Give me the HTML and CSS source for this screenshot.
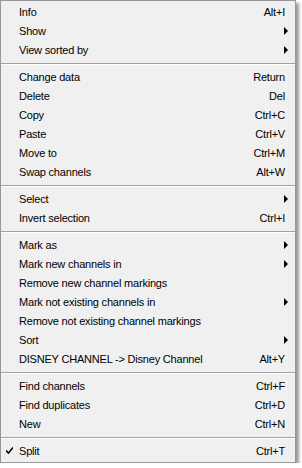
FILE: index.html
```html
<!DOCTYPE html>
<html lang="en">
  <head>
    <meta charset="UTF-8" />
    <title>Channel list - context menu</title>
    <link rel="stylesheet" href="styles.css">
  </head>
  <body>
    <ul class="menu">
      <li class="item"><span class="label">Info</span><span class="key">Alt+I</span></li>
      <li class="item"><span class="label">Show</span><span class="arrow"></span></li>
      <li class="item"><span class="label">View sorted by</span><span class="arrow"></span></li>
      <li class="sep"></li>
      <li class="item"><span class="label">Change data</span><span class="key">Return</span></li>
      <li class="item"><span class="label">Delete</span><span class="key">Del</span></li>
      <li class="item"><span class="label">Copy</span><span class="key">Ctrl+C</span></li>
      <li class="item"><span class="label">Paste</span><span class="key">Ctrl+V</span></li>
      <li class="item"><span class="label">Move to</span><span class="key">Ctrl+M</span></li>
      <li class="item"><span class="label">Swap channels</span><span class="key">Alt+W</span></li>
      <li class="sep"></li>
      <li class="item"><span class="label">Select</span><span class="arrow"></span></li>
      <li class="item"><span class="label">Invert selection</span><span class="key">Ctrl+I</span></li>
      <li class="sep"></li>
      <li class="item"><span class="label">Mark as</span><span class="arrow"></span></li>
      <li class="item"><span class="label">Mark new channels in</span><span class="arrow"></span></li>
      <li class="item"><span class="label">Remove new channel markings</span></li>
      <li class="item"><span class="label">Mark not existing channels in</span><span class="arrow"></span></li>
      <li class="item"><span class="label">Remove not existing channel markings</span></li>
      <li class="item"><span class="label">Sort</span><span class="arrow"></span></li>
      <li class="item"><span class="label">DISNEY CHANNEL -&gt; Disney Channel</span><span class="key">Alt+Y</span></li>
      <li class="sep"></li>
      <li class="item"><span class="label">Find channels</span><span class="key">Ctrl+F</span></li>
      <li class="item"><span class="label">Find duplicates</span><span class="key">Ctrl+D</span></li>
      <li class="item"><span class="label">New</span><span class="key">Ctrl+N</span></li>
      <li class="sep"></li>
      <li class="item checked">
        <span class="check">
          <svg width="7" height="7" viewBox="0 0 7 7"><path d="M0 3.5 L2.5 6 L7 0.5" fill="none" stroke="#000" stroke-width="1.6"/></svg>
        </span>
        <span class="label">Split</span><span class="key">Ctrl+T</span>
      </li>
    </ul>
  </body>
</html>
```

FILE: styles.css
```css
body {
  margin: 0;
  background-color: #fff;
  font-family: "Liberation Sans", Arial, sans-serif;
  font-size: 11px;
  letter-spacing: -0.2px;
  color: #000;
}

.menu {
  list-style: none;
  margin: 0;
  padding: 1px 0 2px;
  width: 294px;
  background-color: #f0f0f0;
  border: 1px solid #979797;
  box-shadow: 3px 3px 3px rgba(0, 0, 0, 0.4);
}

.item {
  position: relative;
  display: flex;
  align-items: center;
  height: 19px;
  padding: 0 10px 0 18px;
}

.label {
  flex: 1;
  white-space: nowrap;
}

.key {
  white-space: nowrap;
}

.arrow {
  width: 0;
  height: 0;
  margin-right: -3px;
  border-top: 4px solid transparent;
  border-bottom: 4px solid transparent;
  border-left: 4px solid #000;
}

.check {
  position: absolute;
  left: 5px;
  top: 6px;
  line-height: 0;
}

.sep {
  height: 0;
  margin: 4px 0 2px;
  border-top: 1px solid #a0a0a0;
  border-bottom: 1px solid #fff;
}
```
